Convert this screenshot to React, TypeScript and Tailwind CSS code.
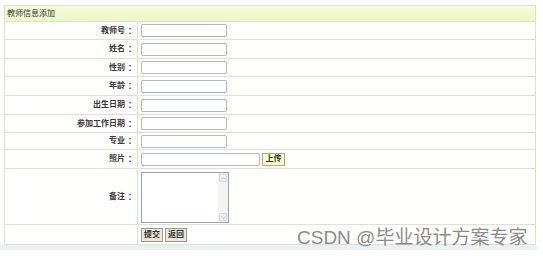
import React from "react";

const font = { fontFamily: '"Liberation Sans", "Noto Sans CJK SC", sans-serif' };

function Label({ text }: { text: string }) {
  return (
    <div className="w-[133px] shrink-0 border-r border-[#dfe3cc] flex items-center justify-end pr-[3px] text-[8px] font-bold text-[#3a3a3a] bg-[#fffffd]">
      <span>{text}</span>
      <span className="ml-[1px]" style={{ fontFamily: '"Noto Sans CJK TC", sans-serif' }}>：</span>
    </div>
  );
}

function Row({ label, h, children, last }: { label: string; h: string; children?: React.ReactNode; last?: boolean }) {
  return (
    <div className={`flex ${h} ${last ? "" : "border-b border-[#dfe3cc]"}`}>
      <Label text={label} />
      <div className="flex-1 flex items-center pl-[3px] bg-[#fffffd]">{children}</div>
    </div>
  );
}

function Input({ w = "w-[86px]" }: { w?: string }) {
  return <div className={`${w} h-[13px] border border-[#b4b9bd] rounded-[2px] bg-white`} />;
}

export default function App() {
  const rows: [string, string][] = [
    ["教师号", "h-[18px]"],
    ["姓名", "h-[19px]"],
    ["性别", "h-[18px]"],
    ["年龄", "h-[19px]"],
    ["出生日期", "h-[19px]"],
    ["参加工作日期", "h-[18px]"],
    ["专业", "h-[17px]"],
  ];
  return (
    <div className="relative w-[543px] h-[259px] bg-white overflow-hidden" style={font}>
      <div className="ml-[4px] mt-[5px] w-[532px] border border-[#dfe3cc]">
        <div className="h-[16px] border-b border-[#dfe3cc] bg-gradient-to-b from-[#f5fcdc] to-[#eaf8c6] flex items-center pl-[2px] text-[8px] text-[#333]">
          教师信息添加
        </div>
        {rows.map(([l, h]) => (
          <Row key={l} label={l} h={h}>
            <Input />
          </Row>
        ))}
        <Row label="照片" h="h-[19px]">
          <Input w="w-[119px]" />
          <div className="ml-[2px] w-[23px] h-[13px] border border-[#a8a8a0] bg-[#ffffc6] flex items-center justify-center text-[8px] font-bold text-[#333]">
            上传
          </div>
        </Row>
        <div className="flex h-[56px] border-b border-[#dfe3cc]">
          <Label text="备注" />
          <div className="flex-1 flex items-start pt-[3px] pl-[3px] bg-[#fffffd]">
            <div className="w-[88px] h-[51px] border border-[#8ea6c2] bg-white flex justify-end">
              <div className="w-[10px] h-full bg-[#f4f4f2] flex flex-col justify-between p-[1px]">
                <div className="h-[8px] border border-[#dcdcdc] bg-[#f0f0ee] flex items-center justify-center">
                  <svg width="5" height="3" viewBox="0 0 5 3"><path d="M0.5 2.5 L2.5 0.5 L4.5 2.5" stroke="#b8b8b8" fill="none" strokeWidth="0.8" /></svg>
                </div>
                <div className="h-[8px] border border-[#dcdcdc] bg-[#f0f0ee] flex items-center justify-center">
                  <svg width="5" height="3" viewBox="0 0 5 3"><path d="M0.5 0.5 L2.5 2.5 L4.5 0.5" stroke="#b8b8b8" fill="none" strokeWidth="0.8" /></svg>
                </div>
              </div>
            </div>
          </div>
        </div>
        <div className="flex h-[19px]">
          <div className="w-[133px] shrink-0 border-r border-[#dfe3cc] bg-[#fffffd]" />
          <div className="flex-1 flex items-center pl-[3px] gap-[2px] bg-[#fffffd]">
            <div className="w-[22px] h-[14px] border border-[#9a9a90] bg-[#ece9d8] flex items-center justify-center text-[8px] font-bold text-[#333]">
              提交
            </div>
            <div className="w-[22px] h-[14px] border border-[#9a9a90] bg-[#ece9d8] flex items-center justify-center text-[8px] font-bold text-[#333]">
              返回
            </div>
          </div>
        </div>
      </div>
      <div className="w-[537px] h-[5px] bg-[#eaf0f3]" />
      <div className="absolute left-[297px] top-[226px] text-[19px] leading-[24px] text-[#8c8c8c] whitespace-nowrap" style={{ fontFamily: '"Liberation Sans", "Noto Sans CJK SC", sans-serif' }}>
        CSDN @毕业设计方案专家
      </div>
    </div>
  );
}
